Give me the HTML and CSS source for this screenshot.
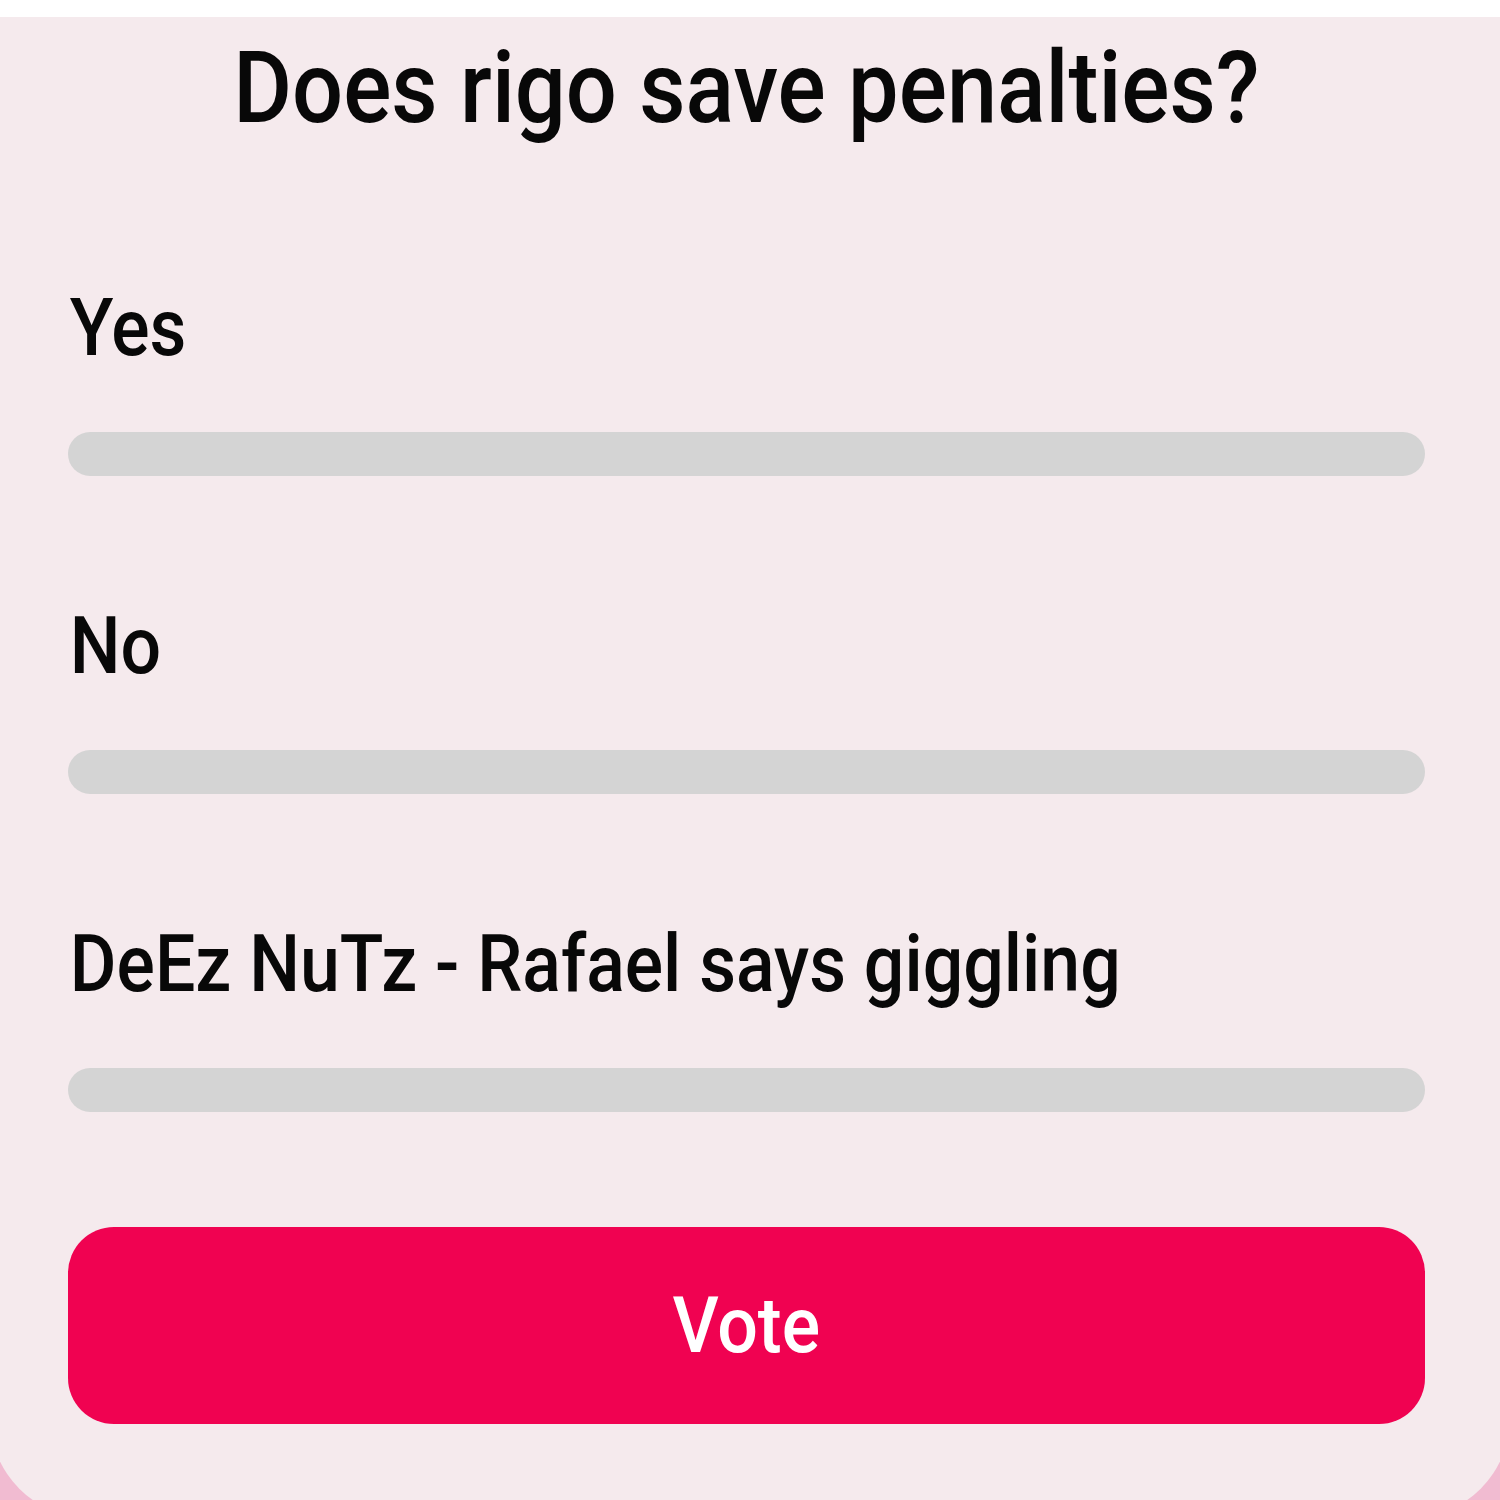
FILE: index.html
```html
<!DOCTYPE html>
<html lang="en">
<head>
<meta charset="utf-8">
<title>Poll</title>
<link rel="stylesheet" href="styles.css">
</head>
<body>
<div class="frame">
  <div class="card">
    <h1 class="question">Does rigo save penalties?</h1>
    <div class="options">
      <div class="option">
        <div class="label">Yes</div>
        <div class="bar"></div>
      </div>
      <div class="option">
        <div class="label">No</div>
        <div class="bar"></div>
      </div>
      <div class="option">
        <div class="label">DeEz NuTz - Rafael says giggling</div>
        <div class="bar"></div>
      </div>
    </div>
    <button class="vote"><span class="vote-text">Vote</span></button>
  </div>
</div>
</body>
</html>
```
FILE: styles.css
```css
html, body {
  margin: 0;
  padding: 0;
  background: #ffffff;
  overflow: hidden;
}
body {
  font-family: Roboto, "Noto Sans", "Liberation Sans", sans-serif;
  color: #080808;
}
.frame {
  margin-top: 17px;
  background: #f1bbd1;
  height: 1483px;
  overflow: hidden;
}
.card {
  margin: 0 -10px;
  background: #f5eaed;
  border-radius: 0 0 100px 100px;
  padding: 12px 85px 94px 78px;
  display: flex;
  flex-direction: column;
}
.question {
  margin: 0 0 135px 0;
  font-size: 100px;
  font-weight: 500;
  line-height: 117px;
  text-align: center;
  transform: scaleX(0.9);
  transform-origin: 50% 50%;
}
.options {
  display: flex;
  flex-direction: column;
  gap: 123px;
}
.option {
  display: flex;
  flex-direction: column;
  gap: 57px;
}
.label {
  font-size: 80px;
  font-weight: 500;
  line-height: 94px;
  padding-left: 2px;
  transform: scaleX(0.895);
  transform-origin: 0 50%;
}
.bar {
  height: 44px;
  border-radius: 22px;
  background: #d4d4d4;
}
.vote {
  margin-top: 115px;
  height: 197px;
  border: none;
  border-radius: 46px;
  background: #f00251;
  color: #ffffff;
  font-family: Roboto, "Noto Sans", "Liberation Sans", sans-serif;
  font-size: 78px;
  font-weight: 500;
  display: flex;
  align-items: center;
  justify-content: center;
  padding: 0;
}
.vote-text {
  display: inline-block;
  transform: scaleX(0.92);
}
```
